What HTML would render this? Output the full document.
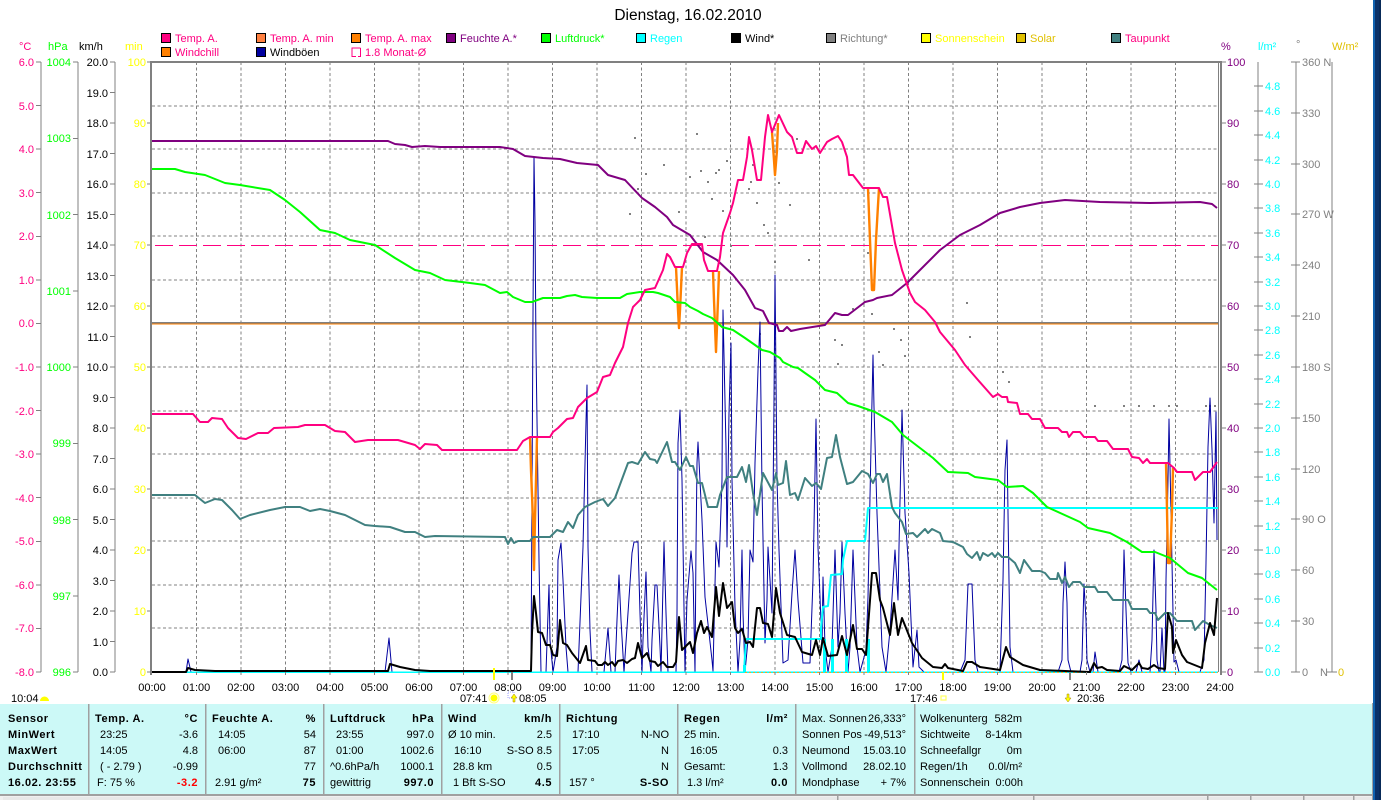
<!DOCTYPE html>
<html>
<head>
<meta charset="utf-8">
<title>Dienstag, 16.02.2010</title>
<style>
html,body{margin:0;padding:0;background:#fff;width:1381px;height:800px;overflow:hidden}
svg{display:block;position:absolute;left:0;top:0}
text{font-family:"Liberation Sans",sans-serif;font-size:11px}
.b{font-weight:bold;letter-spacing:.55px}
.e{text-anchor:end}
.c{text-anchor:middle}
.p{fill:#ff0080}.g{fill:#00ff00}.y{fill:#ffff00}.u{fill:#800080}.a{fill:#00ffff}.h{fill:#808080}.o{fill:#e0c000}
polyline{fill:none;stroke-linejoin:round}
</style>
</head>
<body>
<svg width="1381" height="800" viewBox="0 0 1381 800" xmlns="http://www.w3.org/2000/svg">
<rect width="1381" height="800" fill="#fff"/>

<text x="688" y="20" class="c" style="font-size:15.5px">Dienstag, 16.02.2010</text>

<!-- legend -->
<g stroke="#000" stroke-width="1">
<rect x="161.5" y="33.5" width="9" height="9" fill="#ff0080"/>
<rect x="256.5" y="33.5" width="9" height="9" fill="#ff8040"/>
<rect x="351.5" y="33.5" width="9" height="9" fill="#ff8000"/>
<rect x="446.5" y="33.5" width="9" height="9" fill="#800080"/>
<rect x="541.5" y="33.5" width="9" height="9" fill="#00ff00"/>
<rect x="636.5" y="33.5" width="9" height="9" fill="#00ffff"/>
<rect x="731.5" y="33.5" width="9" height="9" fill="#000"/>
<rect x="826.5" y="33.5" width="9" height="9" fill="#808080"/>
<rect x="921.5" y="33.5" width="9" height="9" fill="#ffff00"/>
<rect x="1016.5" y="33.5" width="9" height="9" fill="#e0c000"/>
<rect x="1111.5" y="33.5" width="9" height="9" fill="#408080"/>
<rect x="161.5" y="47.5" width="9" height="9" fill="#ff8000"/>
<rect x="256.5" y="47.5" width="9" height="9" fill="#0000a0"/>
</g>
<path d="M360.5 48H352V56.5H356M360.5 48V56.5H358" fill="none" stroke="#ff0080"/>
<text x="175" y="42" class="p">Temp. A.</text>
<text x="270" y="42" class="p">Temp. A. min</text>
<text x="365" y="42" class="p">Temp. A. max</text>
<text x="460" y="42" class="u">Feuchte A.*</text>
<text x="555" y="42" class="g">Luftdruck*</text>
<text x="650" y="42" class="a">Regen</text>
<text x="745" y="42">Wind*</text>
<text x="840" y="42" class="h">Richtung*</text>
<text x="935" y="42" class="y">Sonnenschein</text>
<text x="1030" y="42" class="o">Solar</text>
<text x="1125" y="42" class="p">Taupunkt</text>
<text x="175" y="56" class="p">Windchill</text>
<text x="270" y="56">Windböen</text>
<text x="365" y="56" class="p">1.8 Monat-Ø</text>

<!-- axis units -->
<text x="19" y="50" class="p">°C</text>
<text x="48" y="50" class="g">hPa</text>
<text x="79" y="50">km/h</text>
<text x="125" y="50" class="y">min</text>
<text x="1221" y="50" class="u">%</text>
<text x="1258" y="50" class="a">l/m²</text>
<text x="1296" y="48" class="h">°</text>
<text x="1332" y="50" class="o">W/m²</text>

<!-- axis lines -->
<g stroke="#808080" fill="none" shape-rendering="crispEdges">
<path d="M41 62V672M78 62V672M115 62V672M1258 62V672M1296 62V672M1332 62V672"/>
<path d="M36 62H41M36 105.6H41M36 149.1H41M36 192.7H41M36 236.3H41M36 279.9H41M36 323.4H41M36 367H41M36 410.6H41M36 454.1H41M36 497.7H41M36 541.3H41M36 584.9H41M36 628.4H41M36 672H41"/>
<path d="M73 62H78M73 138.3H78M73 214.5H78M73 290.8H78M73 367H78M73 443.3H78M73 519.5H78M73 595.8H78M73 672H78"/>
<path d="M110 62H115M110 92.5H115M110 123H115M110 153.5H115M110 184H115M110 214.5H115M110 245H115M110 275.5H115M110 306H115M110 336.5H115M110 367H115M110 397.5H115M110 428H115M110 458.5H115M110 489H115M110 519.5H115M110 550H115M110 580.5H115M110 611H115M110 641.5H115M110 672H115"/>
<path d="M147 62H151M147 123H151M147 184H151M147 245H151M147 306H151M147 367H151M147 428H151M147 489H151M147 550H151M147 611H151M147 672H151"/>
<path d="M1222 62H1226M1222 123H1226M1222 184H1226M1222 245H1226M1222 306H1226M1222 367H1226M1222 428H1226M1222 489H1226M1222 550H1226M1222 611H1226M1222 672H1226"/>
<path d="M1254 86H1263M1254 111H1263M1254 135H1263M1254 160H1263M1254 184H1263M1254 208H1263M1254 233H1263M1254 257H1263M1254 282H1263M1254 306H1263M1254 330H1263M1254 355H1263M1254 379H1263M1254 404H1263M1254 428H1263M1254 452H1263M1254 477H1263M1254 501H1263M1254 526H1263M1254 550H1263M1254 574H1263M1254 599H1263M1254 623H1263M1254 648H1263M1254 672H1263"/>
<path d="M1291 62H1300M1291 113H1300M1291 164H1300M1291 214H1300M1291 265H1300M1291 316H1300M1291 367H1300M1291 418H1300M1291 469H1300M1291 519H1300M1291 570H1300M1291 621H1300M1291 672H1300"/>
<path d="M1327 672H1337"/>
</g>

<!-- left axis labels -->
<g class="p">
<text x="34" y="66" class="e">6.0</text><text x="34" y="110" class="e">5.0</text><text x="34" y="153" class="e">4.0</text><text x="34" y="197" class="e">3.0</text><text x="34" y="240" class="e">2.0</text><text x="34" y="284" class="e">1.0</text><text x="34" y="327" class="e">0.0</text><text x="34" y="371" class="e">-1.0</text><text x="34" y="415" class="e">-2.0</text><text x="34" y="458" class="e">-3.0</text><text x="34" y="502" class="e">-4.0</text><text x="34" y="545" class="e">-5.0</text><text x="34" y="589" class="e">-6.0</text><text x="34" y="632" class="e">-7.0</text><text x="34" y="676" class="e">-8.0</text>
</g>
<g class="g">
<text x="71" y="66" class="e">1004</text><text x="71" y="142" class="e">1003</text><text x="71" y="219" class="e">1002</text><text x="71" y="295" class="e">1001</text><text x="71" y="371" class="e">1000</text><text x="71" y="447" class="e">999</text><text x="71" y="524" class="e">998</text><text x="71" y="600" class="e">997</text><text x="71" y="676" class="e">996</text>
</g>
<g>
<text x="108" y="66" class="e">20.0</text><text x="108" y="97" class="e">19.0</text><text x="108" y="127" class="e">18.0</text><text x="108" y="158" class="e">17.0</text><text x="108" y="188" class="e">16.0</text><text x="108" y="219" class="e">15.0</text><text x="108" y="249" class="e">14.0</text><text x="108" y="280" class="e">13.0</text><text x="108" y="310" class="e">12.0</text><text x="108" y="341" class="e">11.0</text><text x="108" y="371" class="e">10.0</text><text x="108" y="402" class="e">9.0</text><text x="108" y="432" class="e">8.0</text><text x="108" y="463" class="e">7.0</text><text x="108" y="493" class="e">6.0</text><text x="108" y="524" class="e">5.0</text><text x="108" y="554" class="e">4.0</text><text x="108" y="585" class="e">3.0</text><text x="108" y="615" class="e">2.0</text><text x="108" y="646" class="e">1.0</text><text x="108" y="676" class="e">0.0</text>
</g>
<g class="y">
<text x="146" y="66" class="e">100</text><text x="146" y="127" class="e">90</text><text x="146" y="188" class="e">80</text><text x="146" y="249" class="e">70</text><text x="146" y="310" class="e">60</text><text x="146" y="371" class="e">50</text><text x="146" y="432" class="e">40</text><text x="146" y="493" class="e">30</text><text x="146" y="554" class="e">20</text><text x="146" y="615" class="e">10</text><text x="146" y="676" class="e">0</text>
</g>

<!-- right axis labels -->
<g class="u">
<text x="1227" y="66">100</text><text x="1227" y="127">90</text><text x="1227" y="188">80</text><text x="1227" y="249">70</text><text x="1227" y="310">60</text><text x="1227" y="371">50</text><text x="1227" y="432">40</text><text x="1227" y="493">30</text><text x="1227" y="554">20</text><text x="1227" y="615">10</text><text x="1227" y="676">0</text>
</g>
<g class="a">
<text x="1265" y="90">4.8</text><text x="1265" y="115">4.6</text><text x="1265" y="139">4.4</text><text x="1265" y="164">4.2</text><text x="1265" y="188">4.0</text><text x="1265" y="212">3.8</text><text x="1265" y="237">3.6</text><text x="1265" y="261">3.4</text><text x="1265" y="286">3.2</text><text x="1265" y="310">3.0</text><text x="1265" y="334">2.8</text><text x="1265" y="359">2.6</text><text x="1265" y="383">2.4</text><text x="1265" y="408">2.2</text><text x="1265" y="432">2.0</text><text x="1265" y="456">1.8</text><text x="1265" y="481">1.6</text><text x="1265" y="505">1.4</text><text x="1265" y="530">1.2</text><text x="1265" y="554">1.0</text><text x="1265" y="578">0.8</text><text x="1265" y="603">0.6</text><text x="1265" y="627">0.4</text><text x="1265" y="652">0.2</text><text x="1265" y="676">0.0</text>
</g>
<g class="h">
<text x="1302" y="66">360 N</text><text x="1302" y="117">330</text><text x="1302" y="168">300</text><text x="1302" y="218">270 W</text><text x="1302" y="269">240</text><text x="1302" y="320">210</text><text x="1302" y="371">180 S</text><text x="1302" y="422">150</text><text x="1302" y="473">120</text><text x="1302" y="523">90  O</text><text x="1302" y="574">60</text><text x="1302" y="625">30</text><text x="1302" y="676">0</text><text x="1320" y="676">N</text>
</g>
<text x="1338" y="676" class="o">0</text>

<!-- grid -->
<g stroke="#808080" stroke-dasharray="3 2.5" fill="none" shape-rendering="crispEdges">
<path d="M152 106H1218M152 149H1218M152 193H1218M152 236H1218M152 280H1218M152 367H1218M152 411H1218M152 454H1218M152 498H1218M152 541H1218M152 585H1218M152 628H1218"/>
<path d="M196.5 62V672M241 62V672M285.5 62V672M330 62V672M374.5 62V672M419 62V672M463.5 62V672M508 62V672M552.5 62V672M597 62V672M641.5 62V672M686 62V672M730.5 62V672M775 62V672M819.5 62V672M864 62V672M908.5 62V672M953 62V672M997.5 62V672M1042 62V672M1086.5 62V672M1131 62V672M1175.5 62V672"/>
</g>
<path d="M152 245.5H1218" stroke="#ff0080" stroke-width="1" stroke-dasharray="18 6" stroke-dashoffset="-3" shape-rendering="crispEdges"/>
<rect x="152" y="322" width="1066" height="1.5" fill="#808080"/>
<rect x="152" y="323.5" width="1066" height="1" fill="#ff8000"/>

<!-- wind direction dots -->
<g fill="#808080">
<rect x="634" y="137" width="2" height="2"/><rect x="696" y="133" width="2" height="2"/><rect x="663" y="164" width="2" height="2"/><rect x="645" y="173" width="2" height="2"/><rect x="700" y="170" width="2" height="2"/><rect x="689" y="176" width="2" height="2"/><rect x="718" y="169" width="2" height="2"/><rect x="715" y="172" width="2" height="2"/><rect x="707" y="181" width="2" height="2"/><rect x="726" y="160" width="2" height="2"/><rect x="637" y="188" width="2" height="2"/><rect x="711" y="198" width="2" height="2"/><rect x="752" y="164" width="2" height="2"/><rect x="750" y="181" width="2" height="2"/><rect x="748" y="188" width="2" height="2"/><rect x="756" y="202" width="2" height="2"/><rect x="678" y="211" width="2" height="2"/><rect x="629" y="213" width="2" height="2"/><rect x="722" y="210" width="2" height="2"/><rect x="789" y="204" width="2" height="2"/><rect x="796" y="138" width="2" height="2"/><rect x="778" y="182" width="2" height="2"/><rect x="763" y="224" width="2" height="2"/><rect x="767" y="232" width="2" height="2"/><rect x="704" y="236" width="2" height="2"/><rect x="730" y="245" width="2" height="2"/><rect x="808" y="259" width="2" height="2"/><rect x="867" y="252" width="2" height="2"/><rect x="774" y="261" width="2" height="2"/><rect x="852" y="308" width="2" height="2"/><rect x="871" y="313" width="2" height="2"/><rect x="893" y="328" width="2" height="2"/><rect x="834" y="339" width="2" height="2"/><rect x="841" y="344" width="2" height="2"/><rect x="900" y="339" width="2" height="2"/><rect x="759" y="333" width="2" height="2"/><rect x="878" y="351" width="2" height="2"/><rect x="904" y="355" width="2" height="2"/><rect x="837" y="363" width="2" height="2"/><rect x="882" y="364" width="2" height="2"/><rect x="966" y="302" width="2" height="2"/><rect x="969" y="336" width="2" height="2"/><rect x="1002" y="371" width="2" height="2"/><rect x="1008" y="381" width="2" height="2"/><rect x="1094" y="405" width="2" height="2"/><rect x="1123" y="405" width="2" height="2"/><rect x="1138" y="405" width="2" height="2"/><rect x="1153" y="405" width="2" height="2"/><rect x="1168" y="405" width="2" height="2"/><rect x="1176" y="405" width="2" height="2"/><rect x="1205" y="405" width="2" height="2"/><rect x="1209" y="405" width="2" height="2"/><rect x="1214" y="405" width="2" height="2"/>
</g>

<!-- Windböen -->
<polyline stroke="#0000a0" stroke-width="1" points="152,672 186,672 188,659 191,672 385,672 389,638 392,672 527,672 531,672 533,314 534,157 535,222 536,350 539,560 541,672 546,672 549,585 550,640 553,672 557,647 558,560 561,543 563,580 566,647 568,672 578,672 583,547 586,422 587,385 588,547 590,630 592,672 604,672 608,628 611,672 615,672 617,620 619,575 621,620 624,672 628,613 632,553 634,542 638,542 640,613 642,672 643,640 646,572 648,647 651,672 652,640 655,585 657,585 660,647 661,672 664,542 666,613 668,672 676,672 677,613 678,443 680,410 682,480 685,672 687,600 691,551 693,573 695,672 696,547 697,463 698,442 702,520 705,597 712,660 713,671 716,542 719,567 722,480 723,310 726,447 727,547 729,413 731,343 732,480 735,607 738,672 740,640 742,550 743,613 745,672 748,640 750,550 753,562 755,463 758,370 760,322 762,487 765,643 767,600 768,547 772,613 774,400 775,275 777,480 779,550 783,663 788,660 792,593 795,550 798,600 803,663 810,663 813,580 816,419 818,547 822,647 823,577 825,647 828,672 832,647 835,550 838,647 840,613 842,542 845,613 848,672 850,647 853,550 857,647 860,672 866,650 868,597 871,447 873,355 874,407 877,513 882,647 886,672 890,630 895,550 898,600 899,547 902,410 905,513 909,573 913,667 917,630 919,667 924,672 960,672 965,660 968,584 972,584 975,660 978,672 1000,672 1003,580 1005,470 1007,440 1008,513 1010,647 1013,672 1058,672 1062,660 1063,603 1065,562 1067,603 1068,660 1071,672 1080,672 1082,660 1083,620 1084,584 1086,620 1087,660 1090,672 1093,672 1095,652 1098,672 1119,672 1122,660 1124,550 1126,610 1128,663 1131,672 1136,672 1139,660 1142,672 1150,672 1152,640 1154,550 1156,610 1157,660 1159,672 1160,672 1162,628 1164,672 1165,672 1166,580 1168,480 1169,419 1171,513 1174,662 1176,660 1179,672 1200,672 1204,660 1206,563 1208,447 1210,398 1212,450 1214,523 1216,412 1217,540"/>

<!-- Regen -->
<rect x="152" y="671.5" width="1066" height="1.5" fill="#00ffff"/>
<rect x="743" y="665" width="3" height="7" fill="#00ffff"/>
<polyline stroke="#00ffff" stroke-width="2" points="744,672 745,655 746,639 821,639 821,628 823,607 828,606 831,575 842,574 843,560 847,541 865,541 868,508 1218,508"/>
<g fill="#00ffff"><rect x="823" y="639" width="3" height="33"/><rect x="831" y="639" width="3" height="33"/><rect x="845" y="639" width="3" height="33"/><rect x="867" y="639" width="3" height="33"/></g>
<path d="M745 672.5H1218" stroke="#ffa020" stroke-width="1" stroke-dasharray="2 2"/>

<!-- Windchill -->
<polyline stroke="#ff8000" stroke-width="2.4" points="530,437 531,470 533,520 534,570 535,520 536,480 537,437"/>
<polyline stroke="#ff8000" stroke-width="2.4" points="676,267 678,310 679,328 680,310 682,267"/>
<polyline stroke="#ff8000" stroke-width="2.4" points="713,271 714,300 716,352 718,300 719,271"/>
<polyline stroke="#ff8000" stroke-width="2.4" points="772,132 774,160 775,175 777,150 778,123"/>
<polyline stroke="#ff8000" stroke-width="2.4" points="868,188 870,240 872,290 874,290 876,240 879,188"/>
<polyline stroke="#ff8000" stroke-width="2.4" points="1166,463 1167,510 1168,563 1170,563 1172,510 1173,468"/>

<!-- Taupunkt -->
<polyline stroke="#408080" stroke-width="2" points="152,495 195,495 205,503 215,499 222,500 232,510 240,519 250,515 270,510 285,507 300,507 310,511 320,509 330,511 345,515 355,520 365,525 375,526 390,527 405,532 415,532 425,537 435,536 505,537 508,544 511,538 514,543 518,541 530,541 533,537 550,537 557,530 563,532 568,522 573,528 578,515 585,507 595,502 603,499 608,506 615,498 628,463 632,462 638,464 645,452 650,459 655,460 657,463 667,442 672,462 675,462 680,470 686,457 690,466 693,466 698,483 702,483 708,507 717,507 720,495 727,477 737,477 742,467 746,482 749,465 753,493 757,515 763,473 772,490 776,473 778,485 783,483 786,461 790,495 795,493 798,500 805,478 812,486 816,483 821,489 827,458 832,457 836,435 840,457 847,484 853,482 862,471 868,474 873,483 877,474 880,474 883,482 887,474 892,507 895,513 902,522 906,534 913,533 917,537 925,529 928,533 932,529 940,533 943,541 953,542 963,547 967,554 972,558 977,552 980,560 983,553 988,556 992,553 995,557 998,553 1002,557 1008,557 1015,563 1020,573 1024,560 1032,571 1040,571 1045,573 1050,579 1057,579 1058,573 1062,583 1065,577 1069,587 1073,582 1080,582 1084,587 1095,587 1098,592 1107,592 1113,600 1128,600 1132,609 1147,609 1150,613 1155,613 1158,620 1165,613 1170,613 1177,621 1192,621 1195,630 1203,621 1210,625 1217,628"/>

<!-- Wind -->
<polyline stroke="#000" stroke-width="2" points="152,672 186,672 188,668 195,670 215,671 388,671 390,664 400,667 415,670 430,671 531,671 532,633 534,596 536,613 538,632 542,633 546,645 550,645 553,655 557,656 560,620 563,643 567,645 572,653 580,663 586,646 588,660 595,661 598,665 602,665 605,662 608,665 612,662 615,666 618,661 623,660 627,663 632,659 635,658 638,643 642,658 647,653 650,661 655,662 658,666 663,662 667,667 673,667 676,662 679,617 682,650 690,642 693,653 697,633 701,621 704,633 707,627 712,637 716,587 719,616 723,583 727,608 732,602 735,628 738,633 742,629 746,643 750,642 753,647 757,608 760,608 763,623 768,624 772,637 776,588 780,613 787,635 795,637 802,652 812,655 816,640 820,655 823,638 828,656 837,655 842,636 847,655 853,625 857,649 862,649 866,655 872,573 876,573 880,600 883,608 890,635 894,603 898,635 902,618 912,643 922,658 933,667 942,668 945,664 948,668 963,671 967,662 972,662 980,667 1000,670 1006,647 1010,657 1023,665 1040,670 1090,672 1094,663 1097,668 1102,667 1107,670 1120,671 1124,666 1132,670 1139,663 1142,668 1148,669 1154,665 1158,668 1165,669 1168,613 1172,627 1173,653 1176,640 1182,655 1187,662 1202,668 1205,643 1210,623 1214,635 1217,598"/>

<!-- Luftdruck -->
<polyline stroke="#00ff00" stroke-width="2" points="152,169 175,169 185,172 205,175 225,183 240,185 270,190 285,200 300,212 320,230 335,233 350,240 375,245 395,258 415,270 430,273 445,280 470,283 485,285 500,293 507,292 513,297 525,302 532,302 543,298 560,298 567,296 575,295 582,297 597,298 620,298 627,294 640,292 653,292 658,293 670,297 675,302 685,303 690,307 698,311 703,314 712,318 722,327 733,330 745,338 755,345 762,350 770,352 780,358 783,362 793,367 798,368 805,373 815,380 825,390 837,393 848,403 858,406 875,412 892,422 903,435 920,448 933,458 948,472 968,473 975,477 998,480 1007,487 1023,486 1033,493 1047,507 1080,522 1088,528 1110,533 1127,542 1142,552 1155,552 1170,558 1188,573 1202,578 1217,590"/>

<!-- Feuchte -->
<polyline stroke="#800080" stroke-width="2" points="152,141 388,141 395,144 405,145 412,147 425,146 440,147 480,147 500,147 513,149 525,156 543,158 560,159 577,163 598,165 608,175 625,180 642,198 655,207 667,217 673,225 690,235 703,252 717,260 733,275 745,290 755,308 763,311 769,323 777,325 779,331 783,331 787,327 791,331 800,329 825,325 835,313 842,315 848,315 865,302 873,300 877,298 892,295 907,283 917,273 940,250 960,235 980,225 1000,213 1020,207 1040,203 1065,200 1100,202 1150,203 1200,202 1212,204 1217,208"/>

<!-- Temp -->
<polyline stroke="#ff0080" stroke-width="2" points="152,414 193,414 200,422 208,422 212,418 222,419 228,428 238,438 246,439 258,433 268,433 274,428 298,427 305,425 325,425 335,431 345,432 355,442 368,440 398,440 415,445 420,449 425,444 437,445 442,450 517,450 523,441 530,437 550,437 553,432 558,428 567,419 573,418 578,407 587,398 597,392 603,377 610,375 615,363 623,347 628,323 633,307 640,300 645,290 655,288 663,270 667,254 670,257 675,267 683,267 687,253 692,244 702,244 704,260 708,271 717,271 720,257 723,233 730,213 733,203 738,180 743,180 747,157 749,137 752,150 757,180 761,180 765,137 768,115 772,132 779,115 787,132 792,137 797,153 802,153 806,141 812,149 816,146 820,153 827,142 832,139 838,136 842,142 847,157 849,175 853,175 863,188 879,188 883,197 887,197 895,243 902,270 910,293 915,302 925,310 935,322 940,332 955,350 965,365 978,380 993,397 998,394 1002,397 1007,397 1008,402 1017,403 1020,414 1028,414 1032,419 1040,419 1045,428 1058,428 1062,432 1067,432 1069,437 1073,432 1080,432 1084,437 1095,437 1098,441 1107,441 1113,449 1128,449 1132,457 1139,458 1143,463 1147,459 1150,463 1168,463 1174,468 1177,472 1192,472 1195,480 1203,472 1210,472 1217,462"/>

<!-- chart frame -->
<g fill="#808080">
<rect x="150" y="61" width="1072" height="2"/>
<rect x="150" y="61" width="2" height="614"/>
<rect x="1220" y="61" width="2" height="614"/>
<rect x="1218" y="61" width="1" height="611"/>
</g>
<path d="M196.5 672V675M241 672V675M285.5 672V675M330 672V675M374.5 672V675M419 672V675M463.5 672V675M508 672V675M552.5 672V675M597 672V675M641.5 672V675M686 672V675M730.5 672V675M775 672V675M819.5 672V675M864 672V675M908.5 672V675M953 672V675M997.5 672V675M1042 672V675M1086.5 672V675M1131 672V675M1175.5 672V675" stroke="#808080" fill="none"/>

<!-- time axis -->
<g>
<text x="152" y="691" class="c">00:00</text><text x="196.5" y="691" class="c">01:00</text><text x="241" y="691" class="c">02:00</text><text x="285.5" y="691" class="c">03:00</text><text x="330" y="691" class="c">04:00</text><text x="374.5" y="691" class="c">05:00</text><text x="419" y="691" class="c">06:00</text><text x="463.5" y="691" class="c">07:00</text><text x="508" y="691" class="c">08:00</text><text x="552.5" y="691" class="c">09:00</text><text x="597" y="691" class="c">10:00</text><text x="641.5" y="691" class="c">11:00</text><text x="686" y="691" class="c">12:00</text><text x="730.5" y="691" class="c">13:00</text><text x="775" y="691" class="c">14:00</text><text x="819.5" y="691" class="c">15:00</text><text x="864" y="691" class="c">16:00</text><text x="908.5" y="691" class="c">17:00</text><text x="953" y="691" class="c">18:00</text><text x="997.5" y="691" class="c">19:00</text><text x="1042" y="691" class="c">20:00</text><text x="1086.5" y="691" class="c">21:00</text><text x="1131" y="691" class="c">22:00</text><text x="1175.5" y="691" class="c">23:00</text><text x="1220" y="691" class="c">24:00</text>
</g>

<!-- sun / moon row -->
<text x="11" y="702">10:04</text>
<path d="M40 701a4.5 4.5 0 0 1 9 0z" fill="#ffff00"/>
<text x="460" y="702">07:41</text>
<rect x="493" y="668" width="2" height="12" fill="#ffff00"/>
<circle cx="494" cy="698" r="3.5" fill="#ffff00"/>
<circle cx="494" cy="698" r="5" fill="none" stroke="#ffff80" stroke-width="1"/>
<rect x="511" y="672" width="2" height="8" fill="#808080"/>
<rect x="508" y="692" width="6" height="6" fill="none" stroke="#a0a0ff" stroke-dasharray="1 1"/>
<path d="M514 694l-3 4h2v4h2v-4h2z" fill="#ffff00" stroke="#a08000" stroke-width=".5"/>
<text x="519" y="702">08:05</text>
<text x="910" y="702">17:46</text>
<rect x="942" y="672" width="2" height="8" fill="#ffff00"/>
<rect x="941" y="696" width="5" height="4" fill="none" stroke="#ffff60" stroke-width="1.2"/>
<rect x="1069" y="672" width="2" height="8" fill="#808080"/>
<path d="M1068 702l-3-4h2v-4h2v4h2z" fill="#ffff00" stroke="#a08000" stroke-width=".5"/>
<text x="1077" y="702">20:36</text>

<!-- bottom panel -->
<rect x="0" y="704" width="1372" height="90" fill="#ccf9f7"/>
<rect x="0" y="794" width="1372" height="2" fill="#a0a0a0"/>
<rect x="0" y="796" width="1372" height="4" fill="#f0f0f0"/>
<rect x="3" y="797" width="1369" height="3" fill="#e8e8e8"/>
<rect x="1372" y="703" width="1" height="97" fill="#a0a0a0"/>
<g fill="#a0a0a0">
<rect x="88" y="704" width="1.5" height="90"/><rect x="205" y="704" width="1.5" height="90"/><rect x="323" y="704" width="1.5" height="90"/><rect x="441" y="704" width="1.5" height="90"/><rect x="559" y="704" width="1.5" height="90"/><rect x="677" y="704" width="1.5" height="90"/><rect x="795" y="704" width="1.5" height="90"/><rect x="914" y="704" width="1.5" height="90"/>
<rect x="837" y="796" width="1.5" height="4"/><rect x="1033" y="796" width="1.5" height="4"/><rect x="1207" y="796" width="1.5" height="4"/><rect x="1250" y="796" width="1.5" height="4"/><rect x="1303" y="796" width="1.5" height="4"/><rect x="1353" y="796" width="1.5" height="4"/>
</g>
<rect x="1373" y="0" width="8" height="800" fill="#0a3168"/>
<rect x="1373" y="0" width="2" height="800" fill="#0f62b0"/>
<rect x="1379" y="0" width="2" height="800" fill="#082a58"/>

<!-- col 1 -->
<g class="b"><text x="8" y="722" class="b">Sensor</text><text x="8" y="738" class="b">MinWert</text><text x="8" y="754" class="b">MaxWert</text><text x="8" y="770" class="b">Durchschnitt</text><text x="8" y="786" class="b">16.02. 23:55</text></g>
<!-- col 2 -->
<text x="95" y="722" class="b">Temp. A.</text><text x="198" y="722" class="b e">°C</text>
<text x="100" y="738">23:25</text><text x="198" y="738" class="e">-3.6</text>
<text x="100" y="754">14:05</text><text x="198" y="754" class="e">4.8</text>
<text x="100" y="770">( - 2.79 )</text><text x="198" y="770" class="e">-0.99</text>
<text x="97" y="786">F: 75 %</text><text x="198" y="786" class="b e" fill="#ff0000">-3.2</text>
<!-- col 3 -->
<text x="212" y="722" class="b">Feuchte A.</text><text x="316" y="722" class="b e">%</text>
<text x="218" y="738">14:05</text><text x="316" y="738" class="e">54</text>
<text x="218" y="754">06:00</text><text x="316" y="754" class="e">87</text>
<text x="316" y="770" class="e">77</text>
<text x="215" y="786">2.91 g/m²</text><text x="316" y="786" class="b e">75</text>
<!-- col 4 -->
<text x="330" y="722" class="b">Luftdruck</text><text x="434" y="722" class="b e">hPa</text>
<text x="336" y="738">23:55</text><text x="434" y="738" class="e">997.0</text>
<text x="336" y="754">01:00</text><text x="434" y="754" class="e">1002.6</text>
<text x="330" y="770">^0.6hPa/h</text><text x="434" y="770" class="e">1000.1</text>
<text x="330" y="786">gewittrig</text><text x="434" y="786" class="b e">997.0</text>
<!-- col 5 -->
<text x="448" y="722" class="b">Wind</text><text x="552" y="722" class="b e">km/h</text>
<text x="448" y="738">Ø 10 min.</text><text x="552" y="738" class="e">2.5</text>
<text x="454" y="754">16:10</text><text x="552" y="754" class="e">S-SO 8.5</text>
<text x="453" y="770">28.8 km</text><text x="552" y="770" class="e">0.5</text>
<text x="453" y="786">1 Bft S-SO</text><text x="552" y="786" class="b e">4.5</text>
<!-- col 6 -->
<text x="566" y="722" class="b">Richtung</text>
<text x="572" y="738">17:10</text><text x="669" y="738" class="e">N-NO</text>
<text x="572" y="754">17:05</text><text x="669" y="754" class="e">N</text>
<text x="669" y="770" class="e">N</text>
<text x="569" y="786">157 °</text><text x="669" y="786" class="b e">S-SO</text>
<!-- col 7 -->
<text x="684" y="722" class="b">Regen</text><text x="788" y="722" class="b e">l/m²</text>
<text x="684" y="738">25 min.</text>
<text x="690" y="754">16:05</text><text x="788" y="754" class="e">0.3</text>
<text x="684" y="770">Gesamt:</text><text x="788" y="770" class="e">1.3</text>
<text x="687" y="786">1.3 l/m²</text><text x="788" y="786" class="b e">0.0</text>
<!-- col 8 -->
<text x="802" y="722">Max. Sonnen</text><text x="906" y="722" class="e">26,333°</text>
<text x="802" y="738">Sonnen Pos</text><text x="906" y="738" class="e">-49,513°</text>
<text x="802" y="754">Neumond</text><text x="906" y="754" class="e">15.03.10</text>
<text x="802" y="770">Vollmond</text><text x="906" y="770" class="e">28.02.10</text>
<text x="802" y="786">Mondphase</text><text x="906" y="786" class="e">+ 7%</text>
<!-- col 9 -->
<text x="920" y="722">Wolkenunterg</text><text x="1022" y="722" class="e">582m</text>
<text x="920" y="738">Sichtweite</text><text x="1022" y="738" class="e">8-14km</text>
<text x="920" y="754">Schneefallgr</text><text x="1022" y="754" class="e">0m</text>
<text x="920" y="770">Regen/1h</text><text x="1022" y="770" class="e">0.0l/m²</text>
<text x="920" y="786">Sonnenschein</text><text x="1023" y="786" class="e">0:00h</text>
</svg>
</body>
</html>
